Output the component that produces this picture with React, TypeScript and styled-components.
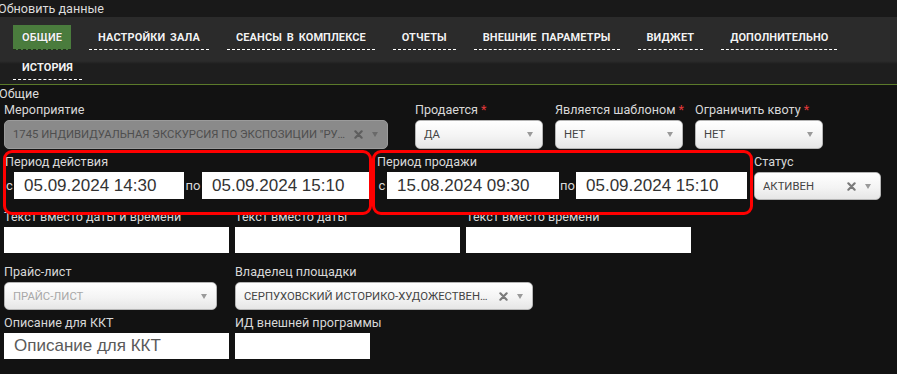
import React from 'react';
import styled, { createGlobalStyle } from 'styled-components';

const GlobalStyle = createGlobalStyle`
  body {
    margin: 0;
    padding: 0;
    background-color: #121212;
    font-family: Roboto, 'Liberation Sans', sans-serif;
    overflow: hidden;
  }
`;

const Page = styled.div`
  width: 897px;
  height: 374px;
  background-color: #121212;
  color: #d8d8d8;
`;

const RefreshLine = styled.div`
  height: 17px;
  line-height: 17px;
  font-size: 12.6px;
  color: #dcdcdc;
  text-indent: -2px;
  background-color: #191919;
`;

// вкладки
const TabBar = styled.div`
  display: flex;
  flex-wrap: wrap;
  column-gap: 18px;
  row-gap: 5px;
  padding: 8px 13px 4px;
  background: linear-gradient(to bottom, #2b2b2b 0, #2b2b2b 44px, #1e1e1e 47px);
  border-bottom: 1px solid #5b7a2a;
`;

interface ITab {
  active?: boolean;
}

const Tab = styled.div<ITab>`
  height: 24px;
  line-height: 25px;
  padding: 0 9px;
  font-size: 11px;
  font-weight: 700;
  letter-spacing: 0.1px;
  word-spacing: 2px;
  text-transform: uppercase;
  color: #f2f2f2;
  text-shadow: 0 0 1px rgba(0, 0, 0, 0.6);
  background-color: ${(props) => (props.active ? '#4a7c3d' : 'transparent')};
  border-bottom: 1px dashed ${(props) => (props.active ? '#1f2f1a' : '#ffffff')};
  cursor: pointer;
`;

const SectionTitle = styled.div`
  height: 17px;
  line-height: 17px;
  font-size: 12.6px;
  color: #dcdcdc;
  text-indent: -1px;
`;

const Form = styled.div`
  display: flex;
  flex-direction: column;
`;

interface IRow {
  gap?: number;
  top?: number;
  left?: number;
}

const Row = styled.div<IRow>`
  display: flex;
  align-items: flex-start;
  gap: ${(props) => props.gap ?? 0}px;
  margin-top: ${(props) => props.top ?? 0}px;
  padding-left: ${(props) => props.left ?? 4}px;
`;

interface IField {
  w: number;
  after?: number;
}

const Field = styled.div<IField>`
  display: flex;
  flex-direction: column;
  width: ${(props) => props.w}px;
  margin-right: ${(props) => props.after ?? 0}px;
`;

const Label = styled.div`
  height: 16px;
  line-height: 16px;
  font-size: 12.6px;
  color: #d8d8d8;
  margin-bottom: 2px;
  white-space: nowrap;
`;

const Star = styled.span`
  color: #e2383a;
`;

interface ISelect {
  h?: number;
  disabled?: boolean;
}

const SelectBox = styled.div<ISelect>`
  display: flex;
  align-items: center;
  height: ${(props) => (props.h ?? 29) - 2}px;
  padding: 0 6px 0 8px;
  border: 1px solid ${(props) => (props.disabled ? '#9b9b9b' : '#b5b5b5')};
  border-radius: 5px;
  background: ${(props) =>
    props.disabled ? '#8a8a8a' : 'linear-gradient(to bottom, #ffffff 0%, #f4f4f4 55%, #e6e6e6 100%)'};
  box-sizing: content-box;
`;

interface ISelectText {
  placeholder?: boolean;
  disabled?: boolean;
}

const SelectText = styled.span<ISelectText>`
  flex: 1;
  min-width: 0;
  font-size: 11.3px;
  text-transform: uppercase;
  white-space: nowrap;
  overflow: hidden;
  text-overflow: ellipsis;
  color: ${(props) => (props.placeholder ? '#a8a8a8' : props.disabled ? '#4e4e4e' : '#444444')};
`;

const Clear = styled.svg`
  width: 9px;
  height: 9px;
  margin: 0 9px 0 8px;
  flex-shrink: 0;
`;

interface IArrow {
  disabled?: boolean;
}

const Arrow = styled.span<IArrow>`
  width: 0;
  height: 0;
  margin-right: 3px;
  border-left: 3.5px solid transparent;
  border-right: 3.5px solid transparent;
  border-top: 5px solid ${(props) => (props.disabled ? '#6a6a6a' : '#9a9a9a')};
  flex-shrink: 0;
`;

interface IInput {
  h?: number;
  w?: number;
  big?: boolean;
}

const TextInput = styled.div<IInput>`
  display: flex;
  align-items: center;
  height: ${(props) => props.h ?? 26}px;
  width: ${(props) => (props.w ? `${props.w}px` : 'auto')};
  padding: 0 10px;
  box-sizing: border-box;
  background-color: #ffffff;
  font-family: 'Liberation Sans', Arial, sans-serif;
  font-size: 17px;
  color: ${(props) => (props.big ? '#333333' : '#5a5a5a')};
  white-space: nowrap;
`;

// блок периода, красная рамка поверх
interface IPeriod {
  w: number;
  padLeft: number;
}

const Period = styled.div<IPeriod>`
  position: relative;
  width: ${(props) => props.w}px;
  height: 59px;
  padding: 4px 0 0 ${(props) => props.padLeft}px;
  box-sizing: border-box;

  &::after {
    content: '';
    position: absolute;
    top: 0;
    left: 0;
    right: 0;
    bottom: -6px;
    border: 3px solid #ff0000;
    border-radius: 9px;
    pointer-events: none;
  }
`;

const DateRow = styled.div`
  display: flex;
  align-items: center;
`;

interface IPrefix {
  w: number;
}

const Prefix = styled.span<IPrefix>`
  width: ${(props) => props.w}px;
  font-size: 13px;
  color: #d8d8d8;
  text-align: center;
`;

const StatusField = styled(Field)`
  margin-left: 1px;
  padding-top: 4px;
`;

function XMark({ color }: { color: string }) {
  return (
    <Clear viewBox="0 0 10 10">
      <path d="M1.5 1.5 L8.5 8.5 M8.5 1.5 L1.5 8.5" stroke={color} strokeWidth="2.4" strokeLinecap="round" />
    </Clear>
  );
}

const tabs = [
  'Общие',
  'Настройки зала',
  'Сеансы в комплексе',
  'Отчеты',
  'Внешние параметры',
  'Виджет',
  'Дополнительно',
  'История',
];

function App() {
  return (
    <Page>
      <GlobalStyle />
      <RefreshLine>Обновить данные</RefreshLine>
      <TabBar>
        {tabs.map((t, i) => (
          <Tab key={t} active={i === 0}>
            {t}
          </Tab>
        ))}
      </TabBar>
      <SectionTitle>Общие</SectionTitle>
      <Form>
        <Row gap={12}>
          <Field w={384} after={15}>
            <Label>Мероприятие</Label>
            <SelectBox disabled>
              <SelectText disabled>1745 ИНДИВИДУАЛЬНАЯ ЭКСКУРСИЯ ПО ЭКСПОЗИЦИИ "РУССКОЕ ИСКУССТВО"</SelectText>
              <XMark color="#5e5e5e" />
              <Arrow disabled />
            </SelectBox>
          </Field>
          <Field w={128}>
            <Label>
              Продается <Star>*</Star>
            </Label>
            <SelectBox>
              <SelectText>Да</SelectText>
              <Arrow />
            </SelectBox>
          </Field>
          <Field w={128}>
            <Label>
              Является шаблоном <Star>*</Star>
            </Label>
            <SelectBox>
              <SelectText>Нет</SelectText>
              <Arrow />
            </SelectBox>
          </Field>
          <Field w={128}>
            <Label>
              Ограничить квоту <Star>*</Star>
            </Label>
            <SelectBox>
              <SelectText>Нет</SelectText>
              <Arrow />
            </SelectBox>
          </Field>
        </Row>

        <Row left={3} top={1}>
          <Period w={369} padLeft={2}>
            <Label>Период действия</Label>
            <DateRow>
              <Prefix w={9}>с</Prefix>
              <TextInput big h={27} w={170}>
                05.09.2024 14:30
              </TextInput>
              <Prefix w={18}>по</Prefix>
              <TextInput big h={27} w={167}>
                05.09.2024 15:10
              </TextInput>
            </DateRow>
          </Period>
          <Period w={381} padLeft={5}>
            <Label>Период продажи</Label>
            <DateRow>
              <Prefix w={10}>с</Prefix>
              <TextInput big h={27} w={172}>
                15.08.2024 09:30
              </TextInput>
              <Prefix w={17}>по</Prefix>
              <TextInput big h={27} w={171}>
                05.09.2024 15:10
              </TextInput>
            </DateRow>
          </Period>
          <StatusField w={127}>
            <Label>Статус</Label>
            <SelectBox h={28}>
              <SelectText>Активен</SelectText>
              <XMark color="#7a7a7a" />
              <Arrow />
            </SelectBox>
          </StatusField>
        </Row>

        <Row gap={6}>
          <Field w={225}>
            <Label>Текст вместо даты и времени</Label>
            <TextInput />
          </Field>
          <Field w={225}>
            <Label>Текст вместо даты</Label>
            <TextInput />
          </Field>
          <Field w={225}>
            <Label>Текст вместо времени</Label>
            <TextInput />
          </Field>
        </Row>

        <Row gap={18} top={11}>
          <Field w={213}>
            <Label>Прайс-лист</Label>
            <SelectBox h={28}>
              <SelectText placeholder>Прайс-лист</SelectText>
              <Arrow />
            </SelectBox>
          </Field>
          <Field w={298}>
            <Label>Владелец площадки</Label>
            <SelectBox h={28}>
              <SelectText>Серпуховский историко-художественный музей</SelectText>
              <XMark color="#7a7a7a" />
              <Arrow />
            </SelectBox>
          </Field>
        </Row>

        <Row gap={6} top={5}>
          <Field w={225}>
            <Label>Описание для ККТ</Label>
            <TextInput>Описание для ККТ</TextInput>
          </Field>
          <Field w={135}>
            <Label>ИД внешней программы</Label>
            <TextInput />
          </Field>
        </Row>
      </Form>
    </Page>
  );
}

export default App;
